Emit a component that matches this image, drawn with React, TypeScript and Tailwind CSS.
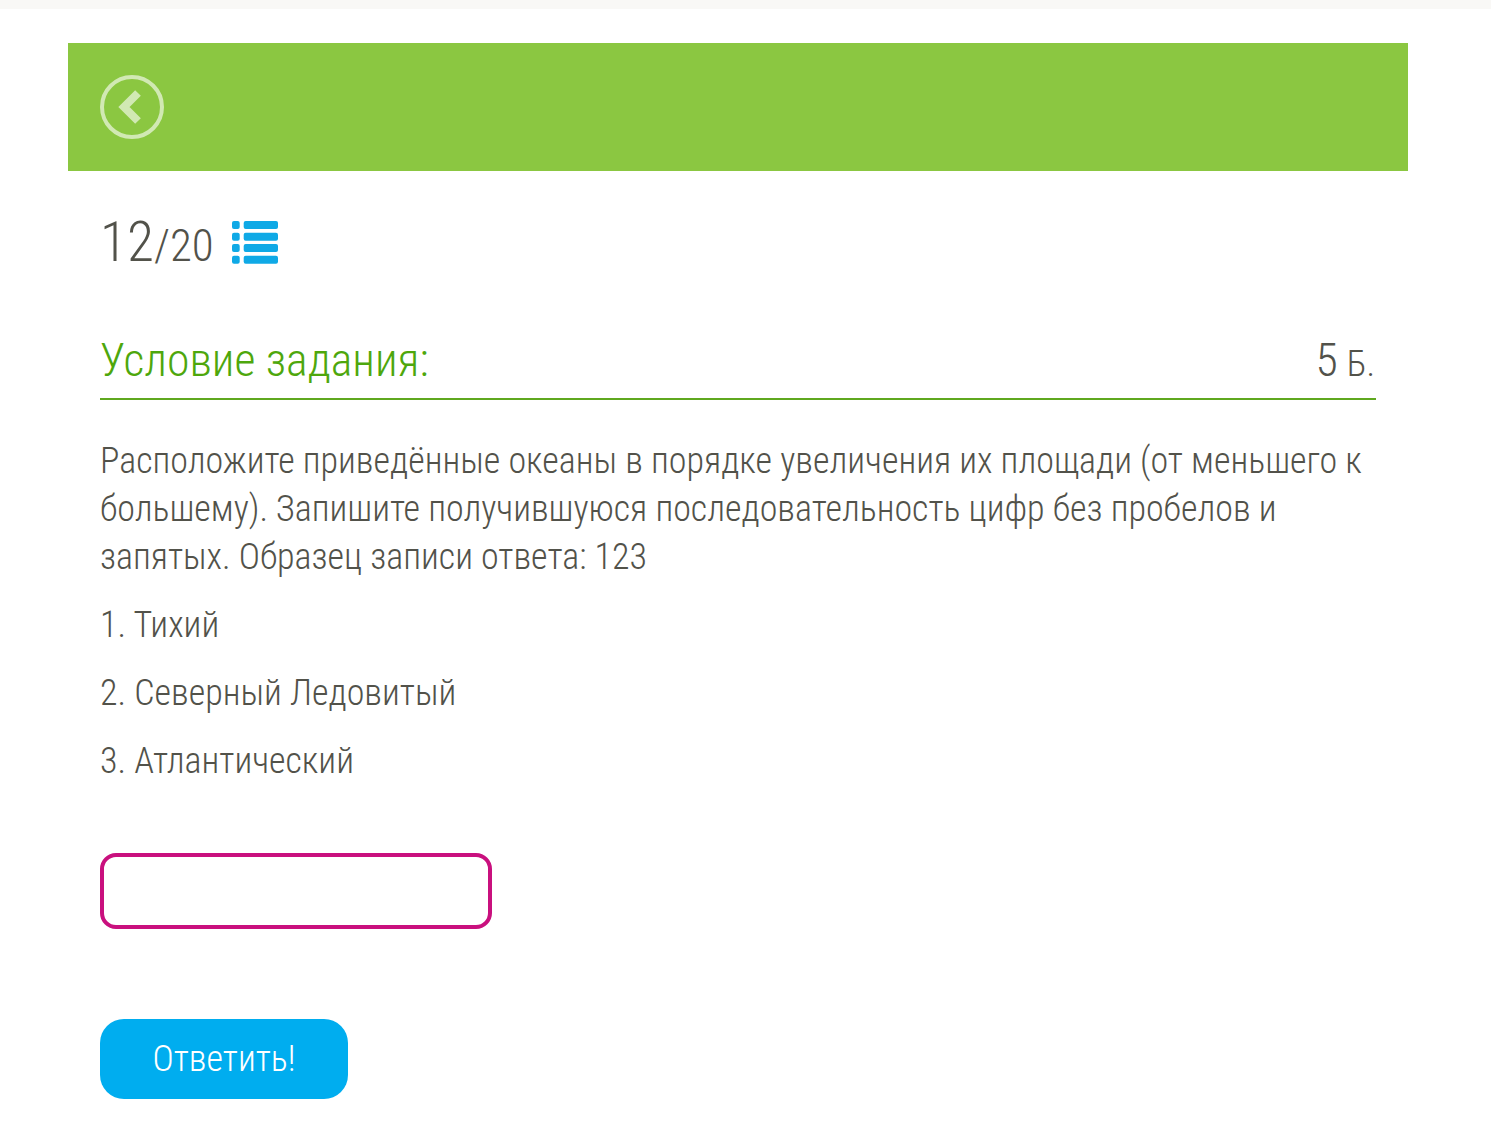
function BackIcon() {
  return (
    <svg width="64" height="64" viewBox="0 0 64 64" fill="none" stroke="#d1e9b3">
      <circle cx="32" cy="32" r="30" strokeWidth="4" />
      <path d="M38 18 L24 32 L38 46" strokeWidth="8" />
    </svg>
  );
}

function ListIcon() {
  return (
    <svg width="46" height="43" viewBox="0 0 46 43" fill="#0fa9e6">
      {[0, 11.7, 23, 34.7].map((y) => (
        <g key={y}>
          <rect x="0" y={y} width="7.7" height="8" rx="2" />
          <rect x="11.7" y={y} width="34.3" height="8" rx="2" />
        </g>
      ))}
    </svg>
  );
}

export default function App() {
  return (
    <div className="min-h-[1148px] bg-white font-['Roboto',sans-serif] font-light [font-stretch:75%] text-[#52524a]">
      <div className="h-[9px] bg-[#f9f8f6]" />
      <div className="px-[68px] pt-[34px] pr-[83px]">
        <div className="flex h-[128px] items-center bg-[#8bc741] pl-[32px]">
          <BackIcon />
        </div>
        <div className="px-[32px]">
          <div className="mt-[40px] flex h-[64px] items-center">
            <span className="text-[55.5px] leading-[64px]">12</span>
            <span className="text-[45px] leading-[64px] mt-[6px]">/20</span>
            <span className="ml-[18px] mt-[-2px]">
              <ListIcon />
            </span>
          </div>
          <div className="mt-[49px] flex h-[76px] items-start justify-between border-b-2 border-[#5fa81f]">
            <h2 className="mt-[9px] text-[45.75px] leading-[56px] font-light text-[#4ea70c]">Условие задания:</h2>
            <div className="mt-[9px] pr-[1px]">
              <span className="text-[45.75px] leading-[56px]">5</span>
              <span className="ml-[9px] text-[36px] leading-[56px]">Б.</span>
            </div>
          </div>
          <div className="mt-[37px] text-[36px] leading-[48px]">
            <p>
              Расположите приведённые океаны в порядке увеличения их площади (от меньшего к большему). Запишите получившуюся последовательность цифр без пробелов и запятых. Образец записи ответа: 123
            </p>
            <p className="mt-[20px]">1. Тихий</p>
            <p className="mt-[20px]">2. Северный Ледовитый</p>
            <p className="mt-[20px]">3. Атлантический</p>
          </div>
          <input
            type="text"
            aria-label="Ответ"
            className="mt-[68px] block h-[76px] w-[392px] rounded-[16px] border-4 border-[#c9107e] bg-white outline-none"
          />
          <button className="mt-[90px] block h-[80px] w-[248px] rounded-[24px] bg-[#00adef] text-[36px] font-light text-white">
            Ответить!
          </button>
        </div>
      </div>
    </div>
  );
}
